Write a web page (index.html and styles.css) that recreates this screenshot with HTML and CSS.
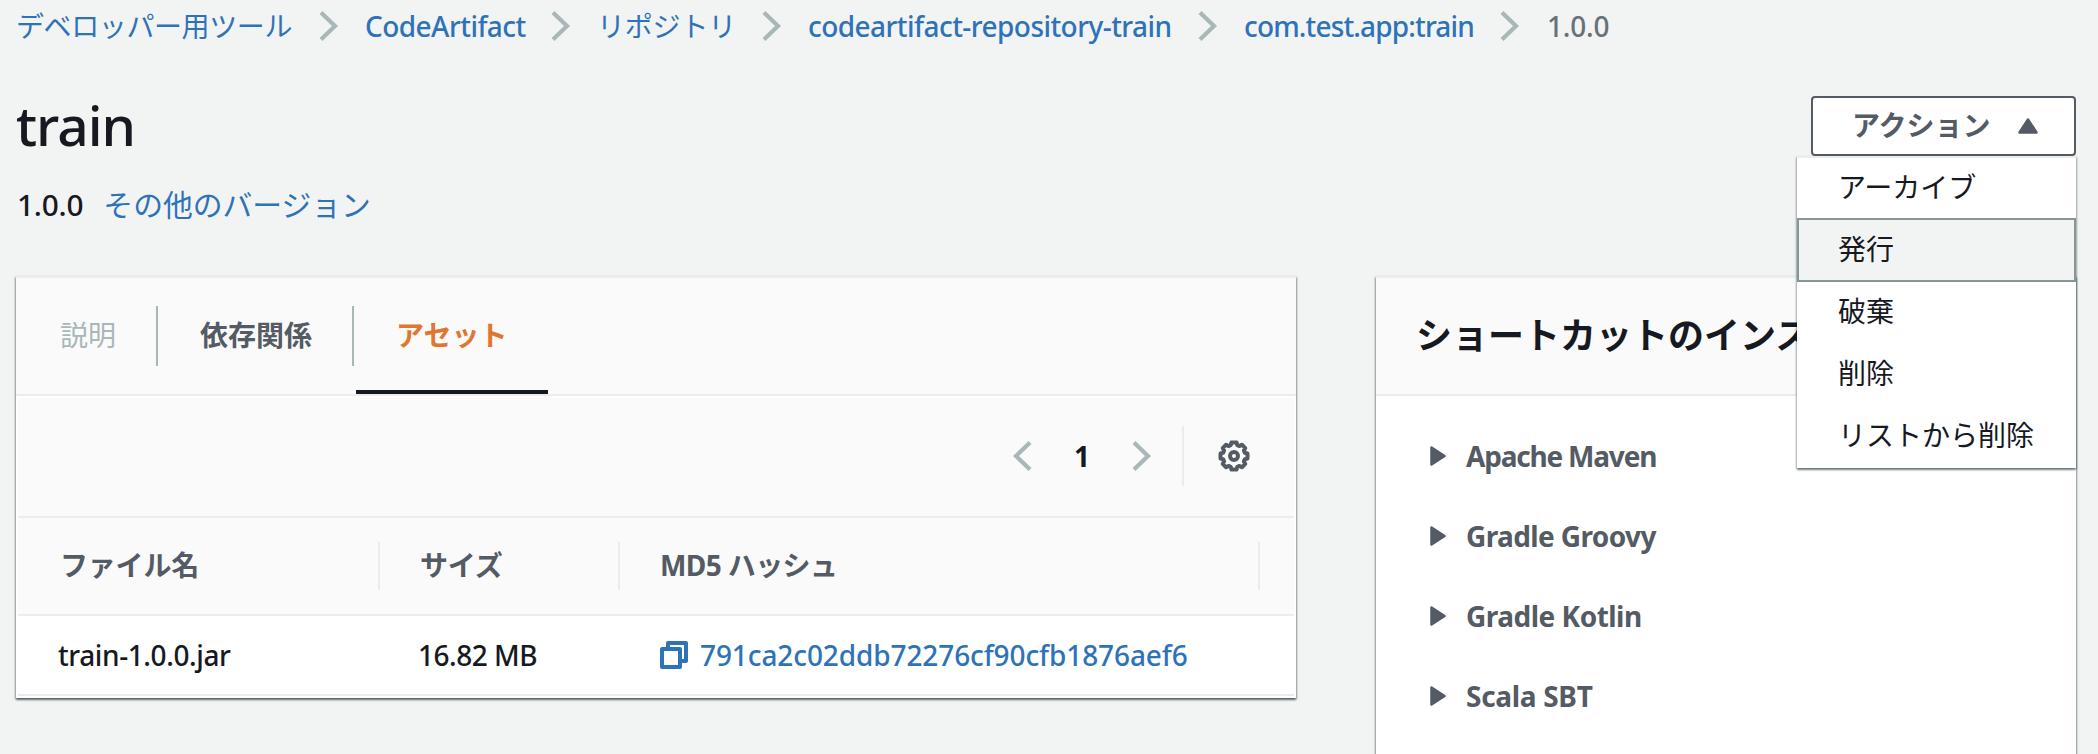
FILE: index.html
```html
<!DOCTYPE html>
<html lang="ja">
<head>
<meta charset="utf-8">
<title>CodeArtifact - train 1.0.0</title>
<link rel="stylesheet" href="styles.css">
</head>
<body>
<svg class="sprite" aria-hidden="true">
  <symbol id="chevron" viewBox="0 0 20 32"><path d="M2 2.500 L16 16 L2 29.500" fill="none" stroke="#aab7b8" stroke-width="4.200"/></symbol>
  <symbol id="caret" viewBox="0 0 16 20"><path d="M1.500 1.500 L14.500 10 L1.500 18.500 Z" fill="#545b64" stroke="#545b64" stroke-width="2.500" stroke-linejoin="round"/></symbol>
</svg>
<nav class="crumbs">
  <a class="crumb crumb-tools">デベロッパー用ツール</a><svg class="chev"><use href="#chevron"/></svg>
  <a class="crumb crumb-service">CodeArtifact</a><svg class="chev"><use href="#chevron"/></svg>
  <a class="crumb crumb-repos">リポジトリ</a><svg class="chev"><use href="#chevron"/></svg>
  <a class="crumb crumb-repo">codeartifact-repository-train</a><svg class="chev"><use href="#chevron"/></svg>
  <a class="crumb crumb-package">com.test.app:train</a><svg class="chev"><use href="#chevron"/></svg>
  <span class="crumb crumb-current">1.0.0</span>
</nav>
<header class="page-head">
  <div>
    <h1 class="title">train</h1>
    <p class="version"><span class="version-no">1.0.0</span><a class="link">その他のバージョン</a></p>
  </div>
  <div class="actions">
    <button class="button"><span class="button-label">アクション</span><svg class="up" viewBox="0 0 20 16"><path d="M10 1.500 L18.500 14.500 L1.500 14.500 Z" fill="#545b64" stroke="#545b64" stroke-width="2.500" stroke-linejoin="round"/></svg></button>
    <ul class="menu">
      <li class="menu-item">アーカイブ</li>
      <li class="menu-item selected">発行</li>
      <li class="menu-item">破棄</li>
      <li class="menu-item">削除</li>
      <li class="menu-item">リストから削除</li>
    </ul>
  </div>
</header>
<main class="columns">
  <section class="panel assets">
    <div class="panel-head tabs">
      <span class="tab disabled">説明</span>
      <span class="tab">依存関係</span>
      <span class="tab active">アセット</span>
    </div>
    <div class="table">
      <div class="toolbar">
        <svg class="chev prev"><use href="#chevron"/></svg>
        <span class="page">1</span>
        <svg class="chev"><use href="#chevron"/></svg>
        <span class="rule"></span>
        <svg class="gear" viewBox="0 0 32 32" fill="none" stroke="#545b64"><path stroke-width="4" stroke-linejoin="round" d="M13.400 2.500 H18.600 L19.300 5.200 L21.500 6.100 L23.900 4.700 L27.300 8.100 L25.900 10.500 L26.800 12.700 L29.500 13.400 V18.600 L26.800 19.300 L25.900 21.500 L27.300 23.900 L23.900 27.300 L21.500 25.900 L19.300 26.800 L18.600 29.500 H13.400 L12.700 26.800 L10.500 25.900 L8.100 27.300 L4.700 23.900 L6.100 21.500 L5.200 19.300 L2.500 18.600 V13.400 L5.200 12.700 L6.100 10.500 L4.700 8.100 L8.100 4.700 L10.500 6.100 L12.700 5.200 Z"/><circle cx="16" cy="16" r="4" stroke-width="4"/></svg>
      </div>
      <div class="row head-row">
        <span class="th">ファイル名</span><span class="th">サイズ</span><span class="th hash-head">MD5 ハッシュ</span>
      </div>
      <div class="row data-row">
        <span class="td file">train-1.0.0.jar</span>
        <span class="td size">16.82 MB</span>
        <span class="td"><svg class="copy" viewBox="0 0 28 28" fill="none" stroke="#2e73b8" stroke-width="4" stroke-linejoin="round"><path d="M2 8 H20 V26 H2 Z"/><path d="M8 8 V2 H26 V20 H20"/></svg><a class="hash">791ca2c02ddb72276cf90cfb1876aef6</a></span>
      </div>
    </div>
  </section>
  <section class="panel install">
    <div class="panel-head"><h2 class="panel-title">ショートカットのインス</h2></div>
    <ul class="guides">
      <li class="guide maven"><svg class="caret"><use href="#caret"/></svg>Apache Maven</li>
      <li class="guide groovy"><svg class="caret"><use href="#caret"/></svg>Gradle Groovy</li>
      <li class="guide kotlin"><svg class="caret"><use href="#caret"/></svg>Gradle Kotlin</li>
      <li class="guide scala"><svg class="caret"><use href="#caret"/></svg>Scala SBT</li>
    </ul>
  </section>
</main>
</body>
</html>
```

FILE: styles.css
```css
* { box-sizing: border-box; }
body {
  margin: 0;
  height: 754px;
  overflow: hidden;
  background: #f2f3f3;
  color: #16191f;
  font: 28px/40px "Noto Sans", "Noto Sans CJK JP", sans-serif;
}
ul, p, h1, h2 { margin: 0; padding: 0; list-style: none; }
.sprite { position: absolute; width: 0; height: 0; }
.crumbs { display: flex; align-items: center; height: 52px; padding-left: 16px; white-space: nowrap; }
.crumb { height: 41px; color: #2e73b8; font-weight: 500; }
.crumb-tools, .crumb-repos { font-weight: 400; }
.crumb-tools { width: 279px; letter-spacing: -.4px; }
.crumb-service { width: 162px; letter-spacing: -.550px; }
.crumb-repos { width: 141px; letter-spacing: -.2px; }
.crumb-repo { width: 366px; letter-spacing: -.550px; }
.crumb-package { width: 232px; letter-spacing: -.850px; }
.crumb-current { padding-left: 1px; color: #687078; letter-spacing: -.2px; }
.chev { flex: none; width: 20px; height: 32px; margin: 0 26px 0 24px; }
.page-head { display: flex; justify-content: space-between; height: 224px; padding: 36px 22px 0 16px; }
.title { font-size: 55px; line-height: 74px; font-weight: 500; letter-spacing: -1px; }
.version { display: flex; gap: 20px; margin-top: 22px; padding-left: 1px; font-size: 29.800px; line-height: 42px; }
.version-no { font-weight: 500; letter-spacing: -.2px; }
.link { color: #2e73b8; }
.actions { position: relative; padding-top: 8px; }
.button {
  display: flex;
  align-items: center;
  justify-content: space-between;
  width: 265px;
  height: 60px;
  padding: 0 36px 0 39px;
  border: 2px solid #545b64;
  border-radius: 4px;
  background: #fff;
  color: #545b64;
  font: 700 28px/40px "Noto Sans", "Noto Sans CJK JP", sans-serif;
}
.button-label { padding-bottom: 3px; }
.up { width: 20px; height: 16px; }
.menu {
  position: absolute;
  z-index: 2;
  top: 68px;
  right: 0;
  width: 279px;
  height: 312px;
  border-top: 2px solid #eaeded;
  background: #fff;
  box-shadow: 0 2px 2px rgba(0, 28, 36, .45), 1px 1px 2px rgba(0, 28, 36, .2), -1px 1px 2px rgba(0, 28, 36, .2);
}
.menu-item { height: 62px; padding-left: 41px; line-height: 58px; }
.selected { height: 64px; margin: -2px 0 0; padding-left: 39px; border: 2px solid #879596; background: #f2f3f3; line-height: 58px; }
.columns { display: flex; gap: 80px; padding: 0 22px 0 16px; }
.panel {
  border-top: 2px solid #eaeded;
  background: #fff;
  box-shadow: 0 2px 2px rgba(0, 28, 36, .5), 1px 1px 2px rgba(0, 28, 36, .25), -1px 1px 2px rgba(0, 28, 36, .25);
}
.assets { width: 1280px; height: 422px; }
.install { width: 700px; height: 500px; }
.panel-head { height: 118px; border-bottom: 2px solid #eaeded; background: #fafafa; }
.tabs { display: flex; }
.tab { position: relative; height: 116px; padding: 0 42px; color: #545b64; font-weight: 700; line-height: 114px; }
.tab + .tab::before { content: ""; position: absolute; left: -2px; top: 28px; width: 2px; height: 60px; background: #aab7b8; }
.disabled { padding: 0 42px 0 44px; color: #aab7b8; font-weight: 400; }
.active { padding-right: 41px; color: #e07730; }
.active::after { content: ""; position: absolute; left: 2px; right: 0; bottom: 0; height: 4px; background: #16191f; }
.table { padding: 2px 2px 0; }
.toolbar { display: flex; align-items: center; height: 120px; padding-right: 44px; justify-content: flex-end; border-bottom: 2px solid #eaeded; background: #fafafa; }
.toolbar .chev { margin: 0 0 2px; }
.prev { transform: scaleX(-1); }
.page { width: 100px; padding-bottom: 3px; text-align: center; font-weight: 700; }
.rule { width: 2px; height: 60px; margin: 0 34px 2px 30px; background: #eaeded; }
.gear { width: 32px; height: 32px; margin-bottom: 2px; }
.row { display: grid; grid-template-columns: 362px 240px 640px; align-items: center; border-bottom: 2px solid #eaeded; }
.head-row { height: 98px; background: #fafafa; }
.th { height: 48px; padding-left: 40px; border-right: 2px solid #eaeded; color: #545b64; font-weight: 700; line-height: 46px; letter-spacing: -.2px; }
.th:first-child { padding-left: 42px; }
.hash-head { letter-spacing: -.6px; }
.data-row { height: 80px; }
.td { display: flex; align-items: center; padding-left: 40px; font-weight: 500; letter-spacing: -.4px; white-space: nowrap; }
.size { padding-left: 38px; letter-spacing: -.5px; }
.copy { width: 28px; height: 28px; margin-right: 12px; }
.hash { color: #2e73b8; letter-spacing: -.1px; }
.panel-title { padding-left: 40px; font-size: 36px; line-height: 116px; font-weight: 700; }
.guides { padding: 20px 54px; }
.guide { display: flex; align-items: center; gap: 20px; height: 80px; color: #545b64; font-weight: 700; }
.maven { letter-spacing: -1.200px; }
.groovy { letter-spacing: -.6px; }
.kotlin { letter-spacing: -.5px; }
.scala { letter-spacing: -.3px; }
.caret { width: 16px; height: 20px; }
```
